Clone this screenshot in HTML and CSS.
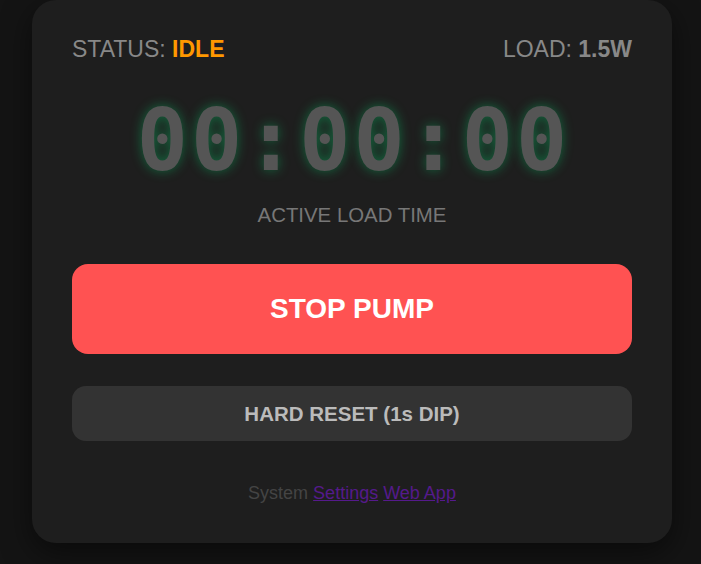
FILE: index.html
```html
<!DOCTYPE html>
<html lang="en">
<head>
<meta charset="utf-8">
<title>Pump Timer</title>
<link rel="stylesheet" href="styles.css">
</head>
<body>
  <main class="card">
    <div class="status-row">
      <div class="stat">STATUS: <span class="idle">IDLE</span></div>
      <div class="stat">LOAD: <span class="load">1.5W</span></div>
    </div>
    <div class="timer">00:00:00</div>
    <div class="label">ACTIVE LOAD TIME</div>
    <button class="btn-stop">STOP PUMP</button>
    <button class="btn-reset">HARD RESET (1s DIP)</button>
    <div class="footer">System <a href="#" class="link">Settings</a> <a href="#" class="link">Web App</a></div>
  </main>
</body>
</html>
```
FILE: styles.css
```css
html, body {
  margin: 0;
  height: 100%;
}
body {
  background: #141414;
  font-family: "Liberation Sans", Arial, sans-serif;
  display: flex;
  justify-content: center;
  align-items: flex-end;
  box-sizing: border-box;
  padding: 0 0 21px 3px;
  overflow: hidden;
}
.card {
  width: 640px;
  flex-shrink: 0;
  box-sizing: border-box;
  background: #1e1e1e;
  border-radius: 24px;
  padding: 36px 40px 40px;
  box-shadow: 0 10px 30px rgba(0, 0, 0, 0.5);
  display: flex;
  flex-direction: column;
  align-items: stretch;
  text-align: center;
}
.status-row {
  display: flex;
  justify-content: space-between;
  font-size: 23px;
  line-height: 26px;
  color: #888;
}
.idle {
  color: #ff9800;
  font-weight: bold;
}
.load {
  font-weight: bold;
}
.timer {
  margin-top: 29px;
  font-family: "DejaVu Sans Mono", monospace;
  font-weight: bold;
  font-size: 85px;
  line-height: 99px;
  letter-spacing: 3px;
  padding-left: 3px;
  color: #555;
  text-shadow: 0 0 12px rgba(0, 230, 118, 0.38);
}
.label {
  margin-top: 14px;
  font-size: 20.4px;
  line-height: 23px;
  color: #777;
}
.btn-stop {
  margin-top: 37px;
  height: 90px;
  border: none;
  border-radius: 16px;
  background: #ff5252;
  color: #fff;
  font-family: "Liberation Sans", Arial, sans-serif;
  font-weight: bold;
  font-size: 28px;
}
.btn-reset {
  margin-top: 32px;
  height: 55px;
  border: none;
  border-radius: 14px;
  background: #333;
  color: #bbb;
  font-family: "Liberation Sans", Arial, sans-serif;
  font-weight: bold;
  font-size: 20.5px;
}
.footer {
  margin-top: 42px;
  font-size: 18px;
  line-height: 20px;
  color: #444;
}
.link {
  color: #551a8b;
}
```
